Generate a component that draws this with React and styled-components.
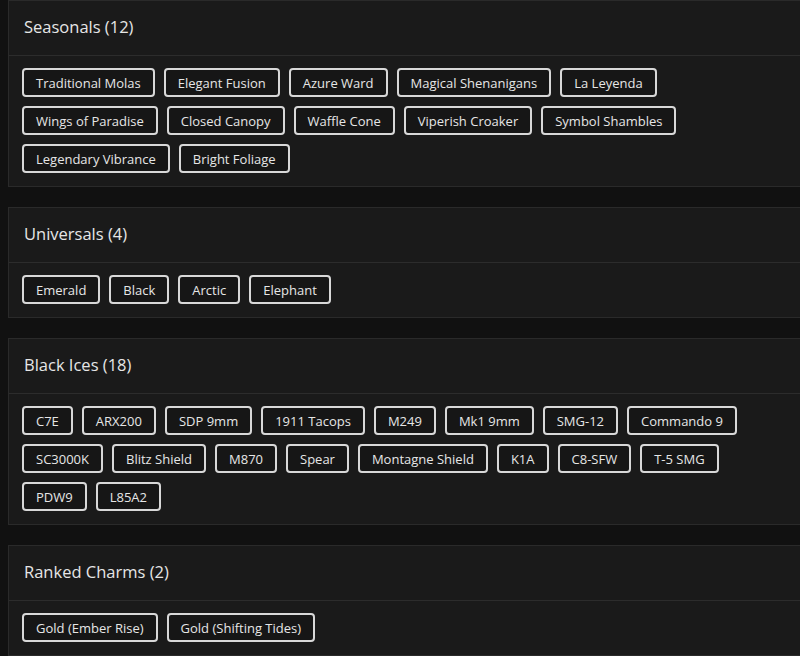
import React from "react";
import styled, { createGlobalStyle } from "styled-components";

const Global = createGlobalStyle`
  html, body { margin: 0; padding: 0; background: #111111; overflow: hidden; }
  body { font-family: "Open Sans", "Liberation Sans", sans-serif; }
`;

const Page = styled.div`
  display: flex;
  flex-direction: column;
  gap: 20px;
  padding: 0 0 0 8px;
  margin-right: -8px;
`;

const Card = styled.section`
  background: #1a1a1a;
  border: 1px solid #2a2a2a;
`;

const Header = styled.header`
  box-sizing: border-box;
  height: 55px;
  display: flex;
  align-items: center;
  padding: 0 15px 3px;
  border-bottom: 1px solid #2c2c2c;
`;

const Title = styled.h2`
  margin: 0;
  font-size: 16.5px;
  font-weight: 500;
  color: #e6e6e6;
`;

const Body = styled.div`
  display: flex;
  flex-wrap: wrap;
  row-gap: 9px;
  column-gap: 9px;
  padding: 12px 20px 13px 13px;
`;

const Tag = styled.span`
  box-sizing: border-box;
  height: 29px;
  display: inline-flex;
  align-items: center;
  padding: 0 12px;
  border: 2px solid #d8d8d8;
  border-radius: 4px;
  background: #161616;
  color: #e6e6e6;
  font-size: 13px;
  white-space: nowrap;
`;

const groups = [
  {
    title: "Seasonals (12)",
    items: [
      "Traditional Molas", "Elegant Fusion", "Azure Ward", "Magical Shenanigans", "La Leyenda",
      "Wings of Paradise", "Closed Canopy", "Waffle Cone", "Viperish Croaker", "Symbol Shambles",
      "Legendary Vibrance", "Bright Foliage",
    ],
  },
  { title: "Universals (4)", items: ["Emerald", "Black", "Arctic", "Elephant"] },
  {
    title: "Black Ices (18)",
    items: [
      "C7E", "ARX200", "SDP 9mm", "1911 Tacops", "M249", "Mk1 9mm", "SMG-12", "Commando 9",
      "SC3000K", "Blitz Shield", "M870", "Spear", "Montagne Shield", "K1A", "C8-SFW", "T-5 SMG",
      "PDW9", "L85A2",
    ],
  },
  { title: "Ranked Charms (2)", items: ["Gold (Ember Rise)", "Gold (Shifting Tides)"] },
];

export default function App() {
  return (
    <>
      <Global />
      <Page>
        {groups.map((g) => (
          <Card key={g.title}>
            <Header>
              <Title>{g.title}</Title>
            </Header>
            <Body>
              {g.items.map((it) => (
                <Tag key={it}>{it}</Tag>
              ))}
            </Body>
          </Card>
        ))}
      </Page>
    </>
  );
}
